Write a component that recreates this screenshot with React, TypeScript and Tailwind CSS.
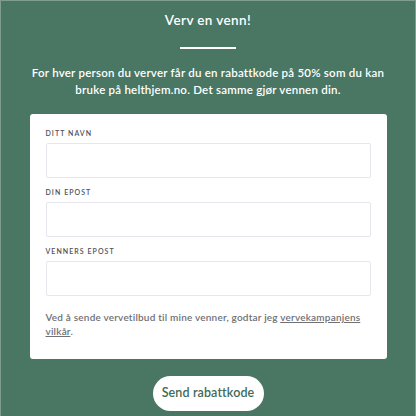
import React from 'react'

const fields = ['Ditt navn', 'Din epost', 'Venners epost']

export default function App() {
  return (
    <div
      className="w-[416px] h-[416px] bg-[#4a7764] border-t border-l border-r border-[#7f9e90] flex flex-col items-center overflow-hidden"
      style={{ fontFamily: 'Lato, "Noto Sans", sans-serif' }}
    >
      <h1 className="shrink-0 mt-[9px] text-[13.5px] leading-[20px] tracking-[0.03em] font-semibold text-white">
        Verv en venn!
      </h1>
      <div className="shrink-0 mt-[17px] w-[56px] h-[2px] bg-white" />
      <p className="shrink-0 mt-[15px] w-[380px] text-center text-[11.5px] leading-[17px] tracking-[0.02em] font-semibold text-white">
        For hver person du verver får du en rabattkode på 50% som du kan bruke på helthjem.no. Det samme gjør vennen din.
      </p>
      <div className="shrink-0 mt-[16px] w-[357px] bg-white rounded-[3px] px-[16px] pt-[14px] pb-[21px]">
        {fields.map((f, i) => (
          <div key={f} className={i > 0 ? 'mt-[9px]' : ''}>
            <label className="block text-[7px] leading-[10px] font-semibold uppercase tracking-[0.15em] text-[#4f4f55]">
              {f}
            </label>
            <input
              type="text"
              className="mt-[5px] block w-full h-[35px] border border-[#e6e6ee] rounded-[2px] outline-none"
            />
          </div>
        ))}
        <p className="mt-[15px] text-[10px] leading-[13.5px] tracking-[0.02em] font-semibold text-[#707075]">
          Ved å sende vervetilbud til mine venner, godtar jeg{' '}
          <a href="#" className="underline">vervekampanjens vilkår</a>.
        </p>
      </div>
      <button className="shrink-0 mt-[17px] w-[111px] h-[35px] rounded-full bg-white text-[#3f6b58] text-[12.5px] tracking-[0.01em] font-semibold">
        Send rabattkode
      </button>
    </div>
  )
}
